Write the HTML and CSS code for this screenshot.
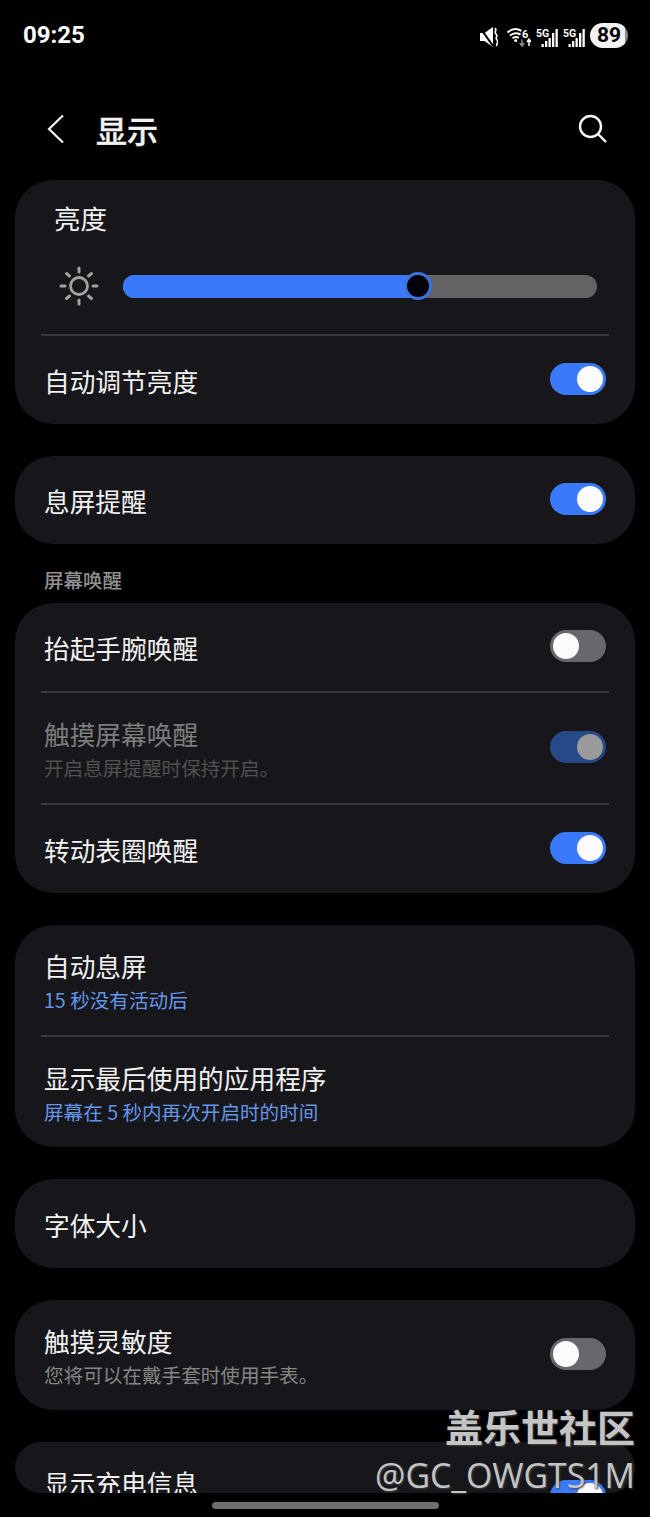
FILE: index.html
```html
<!DOCTYPE html>
<html lang="zh-CN">
<head>
    <meta charset="UTF-8">
    <meta name="viewport" content="width=device-width, initial-scale=1.0">
    <title>显示</title>
    <link rel="stylesheet" href="styles.css">
</head>
<body>
    <div class="screen">
        <div class="status-bar">
            <span class="clock">09:25</span>
            <div class="status-icons">
                <svg class="icon-mute" width="18" height="20" viewBox="0 0 18 20">
                    <path d="M0 6h4.500L13 0v20l-8.500-6H0z" fill="#fff"/>
                    <path d="M1 2l12 17" stroke="#000" stroke-width="2.100"/>
                    <path d="M15 1c2.500 2.500-1.500 3.500 1 6s-1.500 3.500 1 6-1.500 3.500 0 6" fill="none" stroke="#fff" stroke-width="1.700"/>
                </svg>
                <svg class="icon-wifi" width="24" height="20" viewBox="0 0 24 20">
                    <path d="M0.500 5.500C4.500 1.800 10 1.300 14.500 3.800" fill="none" stroke="#fff" stroke-width="2"/>
                    <path d="M3 8.500c3-2.600 7-2.900 10.500-1" fill="none" stroke="#fff" stroke-width="2"/>
                    <path d="M5.500 11.300c1.900-1.500 4.200-1.600 6.300-.4" fill="none" stroke="#fff" stroke-width="2"/>
                    <circle cx="8.700" cy="13.500" r="1.500" fill="#fff"/>
                    <text class="wifi-num" x="15" y="10.500">6</text>
                    <path d="M15 12.500v6m-2.300-2.500l2.300 3 2.300-3" fill="none" stroke="#8a8a8a" stroke-width="1.500"/>
                    <path d="M22 19v-6.500m-2 2.500l2-3 2 3" fill="none" stroke="#fff" stroke-width="1.500"/>
                </svg>
                <svg class="icon-signal" width="22" height="20" viewBox="0 0 22 20">
                    <text class="signal-label" x="0" y="10">5G</text>
                    <path d="M5.500 17h2.300v3h-2.300zM9 14h2.300v6H9zM12.500 11h2.300v9h-2.300zM16 6h2.300v14H16zM19.500 2h2.300v18h-2.300z" fill="#fff"/>
                </svg>
                <svg class="icon-signal" width="22" height="20" viewBox="0 0 22 20">
                    <text class="signal-label" x="0" y="10">5G</text>
                    <path d="M5.500 17h2.300v3h-2.300zM9 14h2.300v6H9zM12.500 11h2.300v9h-2.300zM16 6h2.300v14H16zM19.500 2h2.300v18h-2.300z" fill="#fff"/>
                </svg>
                <span class="battery">89</span>
            </div>
        </div>

        <div class="app-bar">
            <svg class="back-icon" width="18" height="30" viewBox="0 0 18 30">
                <path d="M16 1.500L2 15l14 13.500" fill="none" stroke="#f4f4f4" stroke-width="2.200"/>
            </svg>
            <h1 class="page-title">显示</h1>
            <svg class="search-icon" width="30" height="30" viewBox="0 0 30 30">
                <circle cx="12.500" cy="12.500" r="10.500" fill="none" stroke="#f6f6f6" stroke-width="2.400"/>
                <path d="M20 20l8 8" stroke="#f6f6f6" stroke-width="2.400"/>
            </svg>
        </div>

        <div class="settings-list">
            <section class="card">
                <div class="brightness">
                    <div class="brightness-title">亮度</div>
                    <div class="brightness-control">
                        <svg class="sun-icon" width="40" height="40" viewBox="0 0 40 40">
                            <circle cx="20" cy="20" r="8.500" fill="none" stroke="#a2a2a2" stroke-width="2.800"/>
                            <path d="M20 2v4M20 34v4M2 20h4M34 20h4M7.500 7.500l3 2.500M29.500 30l3 2.500M32.500 7.500l-3 2.500M10.500 30l-3 2.500" stroke="#a2a2a2" stroke-width="3" stroke-linecap="round"/>
                        </svg>
                        <div class="slider">
                            <div class="slider-fill"></div>
                            <div class="slider-thumb"></div>
                        </div>
                    </div>
                </div>
                <div class="row">
                    <div class="row-text"><div class="row-title">自动调节亮度</div></div>
                    <span class="switch on"></span>
                </div>
            </section>

            <section class="card">
                <div class="row">
                    <div class="row-text"><div class="row-title">息屏提醒</div></div>
                    <span class="switch on"></span>
                </div>
            </section>

            <div class="section-group">
                <h2 class="section-label">屏幕唤醒</h2>
                <section class="card">
                    <div class="row">
                        <div class="row-text"><div class="row-title">抬起手腕唤醒</div></div>
                        <span class="switch"></span>
                    </div>
                    <div class="row tall disabled">
                        <div class="row-text">
                            <div class="row-title">触摸屏幕唤醒</div>
                            <div class="row-sub">开启息屏提醒时保持开启。</div>
                        </div>
                        <span class="switch on"></span>
                    </div>
                    <div class="row">
                        <div class="row-text"><div class="row-title">转动表圈唤醒</div></div>
                        <span class="switch on"></span>
                    </div>
                </section>
            </div>

            <section class="card">
                <div class="row tall">
                    <div class="row-text">
                        <div class="row-title">自动息屏</div>
                        <div class="row-sub blue">15 秒没有活动后</div>
                    </div>
                </div>
                <div class="row tall">
                    <div class="row-text">
                        <div class="row-title">显示最后使用的应用程序</div>
                        <div class="row-sub blue">屏幕在 5 秒内再次开启时的时间</div>
                    </div>
                </div>
            </section>

            <section class="card">
                <div class="row font-size-row">
                    <div class="row-text"><div class="row-title">字体大小</div></div>
                </div>
            </section>

            <section class="card">
                <div class="row tall">
                    <div class="row-text">
                        <div class="row-title">触摸灵敏度</div>
                        <div class="row-sub">您将可以在戴手套时使用手表。</div>
                    </div>
                    <span class="switch"></span>
                </div>
            </section>

            <section class="card cut-off">
                <div class="row tall">
                    <div class="row-text">
                        <div class="row-title">显示充电信息</div>
                        <div class="row-sub">&nbsp;</div>
                    </div>
                    <span class="switch on"></span>
                </div>
            </section>
        </div>

        <div class="home-bar"></div>

        <div class="watermark">
            <div class="watermark-name">盖乐世社区</div>
            <div class="watermark-user">@GC_OWGTS1M</div>
        </div>
    </div>
</body>
</html>
```

FILE: styles.css
```css
* {
    margin: 0;
    padding: 0;
    box-sizing: border-box;
}

body {
    font-family: "Noto Sans CJK SC", "Noto Sans", sans-serif;
    background: #000;
    color: #f2f2f2;
}

.screen {
    position: relative;
    width: 650px;
    height: 1517px;
    overflow: hidden;
    background: #000;
}

/* status bar */
.status-bar {
    height: 70px;
    display: flex;
    align-items: center;
    justify-content: space-between;
    padding: 0 22px 0 23px;
}

.clock {
    font-family: Roboto, sans-serif;
    font-size: 24px;
    font-weight: 700;
    color: #fff;
}

.status-icons {
    display: flex;
    align-items: center;
    gap: 5px;
}

.status-icons svg {
    margin-top: 4px;
}

.icon-mute {
    margin-right: 4px;
}

.wifi-num {
    font-family: Roboto, sans-serif;
    font-size: 11px;
    font-weight: 700;
    fill: #fff;
}

.signal-label {
    font-family: Roboto, sans-serif;
    font-size: 10.5px;
    font-weight: 700;
    fill: #fff;
}

.battery {
    width: 38px;
    height: 25px;
    border-radius: 13px;
    background: linear-gradient(90deg, #f2f2f2 92%, #8a8a8a 92%);
    color: #000;
    font-family: Roboto, sans-serif;
    font-size: 21px;
    font-weight: 700;
    line-height: 25px;
    text-align: center;
}

/* app bar */
.app-bar {
    height: 110px;
    display: flex;
    align-items: center;
    padding: 0 42px 0 47px;
}

.back-icon {
    margin-top: 8px;
}

.page-title {
    flex: 1;
    margin-left: 31px;
    margin-top: 10px;
    font-size: 31px;
    font-weight: 500;
    -webkit-text-stroke: 0.4px #f2f2f2;
    line-height: 40px;
}

.search-icon {
    margin-top: 7px;
}

/* cards */
.settings-list {
    height: 1313px;
    overflow: hidden;
    padding: 0 15px;
    display: flex;
    flex-direction: column;
    gap: 32px;
}

.card {
    flex-shrink: 0;
    background: #17171b;
    border-radius: 38px;
}

.card.cut-off {
    height: 51px;
    overflow: hidden;
}

.section-group {
    margin-top: -11px;
}

.section-label {
    padding-left: 29px;
    margin-bottom: 8px;
    font-size: 19.5px;
    font-weight: 500;
    line-height: 30px;
    color: #929292;
}

/* rows */
.row {
    position: relative;
    height: 88px;
    display: flex;
    align-items: center;
    justify-content: space-between;
    padding: 0 29px 0 29px;
}

.row.tall {
    height: 110px;
}

.row.font-size-row {
    height: 89px;
}

.row + .row,
.brightness + .row {
    height: 90px;
    border-top: 2px solid transparent;
}

.row.tall + .row.tall {
    height: 112px;
}

.row + .row.tall {
    height: 112px;
}

.row.tall + .row {
    height: 90px;
}

/* divider stops short of the card edge */
.row + .row::before,
.brightness + .row::before {
    content: "";
    position: absolute;
    top: -2px;
    left: 26px;
    right: 26px;
    height: 2px;
    background: #38383b;
}

.row-title {
    font-size: 25.7px;
    line-height: 34px;
    color: #f2f2f2;
}

.row-title:only-child {
    margin-top: 2px;
}

.row-sub {
    margin: 3px 0 -2px;
    font-size: 19.6px;
    line-height: 28px;
    color: #858585;
}

.row-sub.blue {
    color: #6496e8;
}

.disabled .row-title {
    color: #7d7d7d;
}

.disabled .row-sub {
    color: #505050;
}

/* switches */
.switch {
    position: relative;
    flex-shrink: 0;
    width: 56px;
    height: 32px;
    border-radius: 16px;
    background: #68686c;
    margin-bottom: 3px;
}

.switch::after {
    content: "";
    position: absolute;
    top: 3px;
    left: 3px;
    width: 26px;
    height: 26px;
    border-radius: 50%;
    background: #fbfbfd;
}

.switch.on {
    background: #3a7afa;
}

.switch.on::after {
    left: 27px;
}

.disabled .switch.on {
    background: #264988;
}

.disabled .switch.on::after {
    background: #9b9b9b;
}

/* brightness */
.brightness {
    height: 154px;
    padding: 19px 38px 0 39px;
}

.brightness-title {
    font-size: 26.5px;
    line-height: 38px;
}

.brightness-control {
    display: flex;
    align-items: center;
    gap: 24px;
    margin-top: 29px;
}

.sun-icon {
    flex-shrink: 0;
    margin-left: 5px;
}

.slider {
    position: relative;
    width: 474px;
    height: 23px;
    border-radius: 12px;
    background: #636366;
}

.slider-fill {
    width: 295px;
    height: 100%;
    border-radius: 12px 0 0 12px;
    background: #3a7afa;
}

.slider-thumb {
    position: absolute;
    top: -3px;
    left: 281px;
    width: 28px;
    height: 28px;
    border-radius: 50%;
    background: #02030a;
    border: 3px solid #3a72e0;
}

/* home indicator */
.home-bar {
    width: 227px;
    height: 7px;
    margin: 9px 0 0 212px;
    border-radius: 4px;
    background: #6e6e6e;
}

/* watermark over the screenshot */
.watermark {
    position: absolute;
    top: 1400px;
    right: 15px;
    text-align: right;
    color: #c4c4c4;
    text-shadow: 1px 1px 2px #444;
}

.watermark-name {
    font-size: 38px;
    font-weight: 700;
    line-height: 52px;
}

.watermark-user {
    font-family: "Open Sans", sans-serif;
    font-size: 33.8px;
    line-height: 46px;
}
```
